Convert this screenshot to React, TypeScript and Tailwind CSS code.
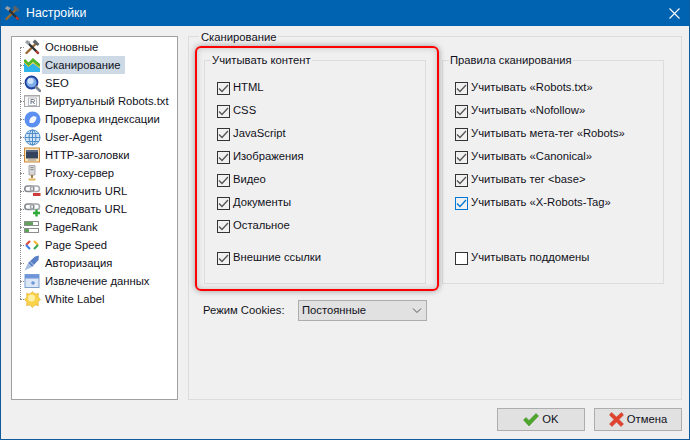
import React from 'react';

// Small hand-drawn tree icons
const ToolsIcon = ({ size = 16 }: { size?: number }) => (
  <svg width={size} height={size} viewBox="0 0 16 16" className="shrink-0">
    <path d="M2.5 14 L12 4.5" stroke="#9a6a32" strokeWidth="2.4" strokeLinecap="round" />
    <path d="M8.5 3 L11 0.5 L15.5 5 L13.5 7 Z" fill="#5d6266" />
    <path d="M14 14 L4.5 4.5" stroke="#2f3235" strokeWidth="2.4" strokeLinecap="round" />
    <path d="M1 3.5 L3 1 L6.5 3 L4.5 6 Z" fill="#9a9fa3" />
    <path d="M12 12 L14.5 14.5" stroke="#c4392e" strokeWidth="2" />
  </svg>
);

const ScanIcon = () => (
  <svg width="16" height="16" viewBox="0 0 16 16" className="shrink-0">
    <path d="M0 5 L5 9 L9 6 L16 11 V15 H0 Z" fill="#2fb4ea" />
    <path d="M0 3 L4.5 7.5 L9 3 L16 9" fill="none" stroke="#53b52c" strokeWidth="3" />
    <path d="M0 5 L4.5 9.5 L9 5.5 L16 11" fill="none" stroke="#f0cc2a" strokeWidth="1" />
  </svg>
);

const SeoIcon = () => (
  <svg width="17" height="17" viewBox="0 0 17 17" className="shrink-0">
    <circle cx="7.5" cy="7.5" r="6" fill="#7eaeea" stroke="#1f3f9e" strokeWidth="1.8" />
    <circle cx="6.5" cy="6" r="3" fill="#cfe2fa" />
    <path d="M12 12 L16 16" stroke="#7c8794" strokeWidth="2.6" strokeLinecap="round" />
  </svg>
);

const RobotsIcon = () => (
  <svg width="16" height="16" viewBox="0 0 16 16" className="shrink-0">
    <rect x="0.5" y="2.5" width="15" height="11" fill="#f7f7f7" stroke="#a8a8a8" />
    <path d="M1 3.5 H15" stroke="#d0d0d0" />
    <rect x="4.5" y="5" width="8" height="7.5" fill="#fff" stroke="#b8bcc2" />
    <path d="M7 11 V6.5 H9.5 Q10.5 6.5 10.5 7.7 Q10.5 8.8 9.5 8.8 H7 M9 8.8 L10.5 11" fill="none" stroke="#6f7b8a" />
  </svg>
);

const IndexIcon = () => (
  <svg width="17" height="17" viewBox="0 0 17 17" className="shrink-0">
    <circle cx="8.5" cy="8.5" r="8" fill="#5c90f0" />
    <path d="M5.5 12 Q4.5 7 9.5 5 L12.5 6 Q12.5 10 9 12 Z" fill="#f4f7fe" />
  </svg>
);

const GlobeIcon = () => (
  <svg width="17" height="17" viewBox="0 0 17 17" className="shrink-0">
    <circle cx="8.5" cy="8.5" r="7.5" fill="#d3e6f8" stroke="#4f8cca" />
    <ellipse cx="8.5" cy="8.5" rx="3.4" ry="7.5" fill="none" stroke="#4f8cca" />
    <path d="M1 8.5 H16 M2.2 4.5 H14.8 M2.2 12.5 H14.8 M8.5 1 V16" stroke="#4f8cca" />
  </svg>
);

const HeadersIcon = () => (
  <svg width="16" height="16" viewBox="0 0 16 16" className="shrink-0">
    <rect x="0.5" y="1" width="15" height="14" fill="#fbe3b8" stroke="#c98a3c" />
    <rect x="2" y="3" width="12" height="8.5" fill="#34435e" />
    <rect x="2" y="3" width="12" height="2" fill="#5a6a86" />
    <rect x="4" y="12.5" width="8" height="1" fill="#8a8f98" />
  </svg>
);

const ProxyIcon = () => (
  <svg width="16" height="16" viewBox="0 0 16 16" className="shrink-0">
    <path d="M5 0.5 H11 V10 H5 Z" fill="#d6d6d8" stroke="#a9aaac" />
    <path d="M6.5 2.5 H9.5 M6.5 4.5 H9.5" stroke="#8d8e90" />
    <path d="M8 10 V13" stroke="#a67b3f" strokeWidth="2" />
    <path d="M4.5 14.5 H11.5" stroke="#e0b25a" strokeWidth="2" />
  </svg>
);

const LinkIcon = ({ badge }: { badge: 'minus' | 'plus' }) => (
  <svg width="17" height="16" viewBox="0 0 17 16" className="shrink-0">
    <rect x="0.8" y="3" width="9" height="5.5" rx="2.7" fill="none" stroke="#85898d" strokeWidth="1.6" />
    <rect x="6.5" y="3" width="9" height="5.5" rx="2.7" fill="none" stroke="#a4a8ac" strokeWidth="1.6" />
    {badge === 'minus' ? (
      <rect x="9" y="10" width="7.5" height="3" fill="#cf3b3b" />
    ) : (
      <path d="M12.5 8.5 V15.5 M9 12 H16" stroke="#2fa93a" strokeWidth="2.4" />
    )}
  </svg>
);

const RankIcon = () => (
  <svg width="16" height="16" viewBox="0 0 16 16" className="shrink-0">
    <rect x="0.5" y="2.5" width="14" height="4" fill="#fff" stroke="#8b8f8b" />
    <rect x="1" y="3" width="8" height="3" fill="#62a35b" />
    <rect x="0.5" y="9.5" width="14" height="4" fill="#fff" stroke="#8b8f8b" />
    <rect x="1" y="10" width="4" height="3" fill="#62a35b" />
  </svg>
);

const SpeedIcon = () => (
  <svg width="16" height="16" viewBox="0 0 16 16" className="shrink-0">
    <path d="M6 4 L2 8" fill="none" stroke="#e0463a" strokeWidth="2.2" />
    <path d="M2 8 L6 12" fill="none" stroke="#3f7fe8" strokeWidth="2.2" />
    <path d="M10 4 L14 8" fill="none" stroke="#f2b632" strokeWidth="2.2" />
    <path d="M14 8 L10 12" fill="none" stroke="#3aa757" strokeWidth="2.2" />
  </svg>
);

const AuthIcon = () => (
  <svg width="16" height="16" viewBox="0 0 16 16" className="shrink-0">
    <path d="M4 8 L11 1.5 L15 0.5 L14.5 5 L8 12 Z" fill="#5a80c4" />
    <path d="M0.5 15.5 L4 8 L8 12 Z" fill="#a5bee2" />
    <path d="M6 6.5 L9.5 10" stroke="#c5d5ec" />
  </svg>
);

const ExtractIcon = () => (
  <svg width="16" height="16" viewBox="0 0 16 16" className="shrink-0">
    <rect x="1" y="1.5" width="14" height="13" fill="#dbe7f6" stroke="#7ba0d0" />
    <rect x="1" y="1.5" width="14" height="4" fill="#6d95d8" />
    <circle cx="9" cy="10" r="1.8" fill="#6d95d8" />
  </svg>
);

const SunIcon = () => (
  <svg width="17" height="17" viewBox="0 0 17 17" className="shrink-0">
    <path d="M8.5 0.5 L11 3 L14.5 2.5 L14 6 L16.5 8.5 L14 11 L14.5 14.5 L11 14 L8.5 16.5 L6 14 L2.5 14.5 L3 11 L0.5 8.5 L3 6 L2.5 2.5 L6 3 Z" fill="#f9d34a" stroke="#e0a92a" strokeWidth="0.6" />
    <circle cx="7.5" cy="7" r="3.5" fill="#fff0a8" />
  </svg>
);

const treeItems: { label: string; icon: React.ReactNode; selected?: boolean }[] = [
  { label: 'Основные', icon: <ToolsIcon /> },
  { label: 'Сканирование', icon: <ScanIcon />, selected: true },
  { label: 'SEO', icon: <SeoIcon /> },
  { label: 'Виртуальный Robots.txt', icon: <RobotsIcon /> },
  { label: 'Проверка индексации', icon: <IndexIcon /> },
  { label: 'User-Agent', icon: <GlobeIcon /> },
  { label: 'HTTP-заголовки', icon: <HeadersIcon /> },
  { label: 'Proxy-сервер', icon: <ProxyIcon /> },
  { label: 'Исключить URL', icon: <LinkIcon badge="minus" /> },
  { label: 'Следовать URL', icon: <LinkIcon badge="plus" /> },
  { label: 'PageRank', icon: <RankIcon /> },
  { label: 'Page Speed', icon: <SpeedIcon /> },
  { label: 'Авторизация', icon: <AuthIcon /> },
  { label: 'Извлечение данных', icon: <ExtractIcon /> },
  { label: 'White Label', icon: <SunIcon /> },
];

const Check = ({ label, checked = true, focused = false, className = '' }: { label: string; checked?: boolean; focused?: boolean; className?: string }) => (
  <div className={`flex h-[23px] items-center ${className}`}>
    <div className={`flex h-[13px] w-[13px] shrink-0 items-center justify-center border ${focused ? 'border-[#0078d7]' : 'border-[#333333]'} ${checked ? '' : 'bg-white'}`}>
      {checked && (
        <svg width="11" height="11" viewBox="0 0 11 11">
          <path d="M1 5.5 L4 8.5 L10 2" fill="none" stroke={focused ? '#0078d7' : '#555555'} strokeWidth="1.3" />
        </svg>
      )}
    </div>
    <span className="ml-[3px] whitespace-nowrap">{label}</span>
  </div>
);

export default function App() {
  return (
    <div className="relative flex h-[440px] w-[690px] flex-col overflow-hidden border border-t-0 border-[#0f5c9c] bg-[#f0f0f0] font-['Liberation_Sans',sans-serif] text-[11.25px] leading-none text-[#101020]">
      <div className="flex h-[26px] shrink-0 items-center justify-between bg-[#0063b1] pl-[3px] pr-[9px] text-white">
        <div className="flex items-center gap-[6px]">
          <ToolsIcon size={16} />
          <span className="pt-[1px] text-[12.3px]">Настройки</span>
        </div>
        <svg width="11" height="11" viewBox="0 0 11 11">
          <path d="M0.5 0.5 L10.5 10.5 M10.5 0.5 L0.5 10.5" stroke="#fff" strokeWidth="1.1" />
        </svg>
      </div>

      <div className="flex h-[374px] shrink-0 gap-[10px] pl-[10px] pr-[7px] pt-[10px]">
        <div className="relative w-[167px] shrink-0 border border-[#a0a0a0] bg-white pl-[12px] pt-[1px]">
          <div className="absolute left-[8px] top-[10px] h-[252px] border-l border-dotted border-[#8a8a8a]" />
          {treeItems.map((item) => (
            <div key={item.label} className="relative flex h-[18px] items-center">
              <div className="absolute left-[-4px] top-[9px] w-[4px] border-t border-dotted border-[#8a8a8a]" />
              <div className="flex w-[18px] shrink-0 items-center">{item.icon}</div>
              <span className={`flex h-full items-center whitespace-nowrap pl-[3px] pr-[5px] pt-[1px] ${item.selected ? 'bg-[#cdd9e5]' : ''}`}>{item.label}</span>
            </div>
          ))}
        </div>

        <fieldset className="-mt-[6px] min-w-0 flex-1 border border-[#dcdcdc]">
          <legend className="ml-[10px] px-[2px] pt-[2px]">Сканирование</legend>
          <div className="mt-[12px] flex gap-[16px] px-[15px]">
            <fieldset className="h-[229px] w-[222px] border border-[#dcdcdc]">
              <legend className="ml-[6px] px-[1px]">Учитывать контент</legend>
              <div className="pl-[12px] pt-[10px]">
                {['HTML', 'CSS', 'JavaScript', 'Изображения', 'Видео', 'Документы', 'Остальное'].map((l) => (
                  <Check key={l} label={l} />
                ))}
                <Check label="Внешние ссылки" className="mt-[9px]" />
              </div>
            </fieldset>
            <fieldset className="h-[229px] w-[222px] border border-[#dcdcdc]">
              <legend className="ml-[6px] px-[1px]">Правила сканирования</legend>
              <div className="pl-[12px] pt-[10px]">
                <Check label="Учитывать «Robots.txt»" />
                <Check label="Учитывать «Nofollow»" />
                <Check label="Учитывать мета-тег «Robots»" />
                <Check label="Учитывать «Canonical»" />
                <Check label="Учитывать тег <base>" />
                <Check label="Учитывать «X-Robots-Tag»" focused />
                <Check label="Учитывать поддомены" checked={false} className="mt-[32px]" />
              </div>
            </fieldset>
          </div>
          <div className="mt-[16px] flex items-center pl-[14px]">
            <span className="w-[95px]">Режим Cookies:</span>
            <div className="flex h-[21px] w-[129px] items-center justify-between border border-[#adadad] bg-[#e1e1e1] pl-[3px] pr-[4px]">
              <span>Постоянные</span>
              <svg width="10" height="6" viewBox="0 0 10 6">
                <path d="M1 0.5 L5 4.5 L9 0.5" fill="none" stroke="#555" />
              </svg>
            </div>
          </div>
        </fieldset>
      </div>

      <div className="flex justify-end gap-[9px] pr-[7px] pt-[8px]">
        <div className="flex h-[23px] w-[88px] items-center justify-center gap-[3px] border border-[#adadad] bg-[#e1e1e1]">
          <svg width="16" height="14" viewBox="0 0 16 14">
            <path d="M0.5 7 L3 4.5 L6 7.5 L13 0.5 L15.5 3 L6 13 Z" fill="#4ea62d" stroke="#3b8a22" strokeWidth="0.5" />
          </svg>
          <span>OK</span>
        </div>
        <div className="flex h-[23px] w-[88px] items-center justify-center gap-[3px] border border-[#adadad] bg-[#e1e1e1]">
          <svg width="15" height="15" viewBox="0 0 15 15">
            <path d="M2.5 0.5 L7.5 5 L12.5 0.5 L14.5 3 L10 7.5 L14.5 12 L12 14.5 L7.5 10 L3 14.5 L0.5 12 L5 7.5 L0.5 3 Z" fill="#e2432e" stroke="#c23522" strokeWidth="0.5" />
          </svg>
          <span>Отмена</span>
        </div>
      </div>

      {/* red annotation frame drawn over the dialog */}
      <div className="pointer-events-none absolute left-[194px] top-[46px] h-[245px] w-[244px] rounded-[6px] border-2 border-[#ff0000] shadow-[0_0_6px_rgba(0,0,0,0.35),inset_0_0_6px_rgba(0,0,0,0.2)]" />
    </div>
  );
}
